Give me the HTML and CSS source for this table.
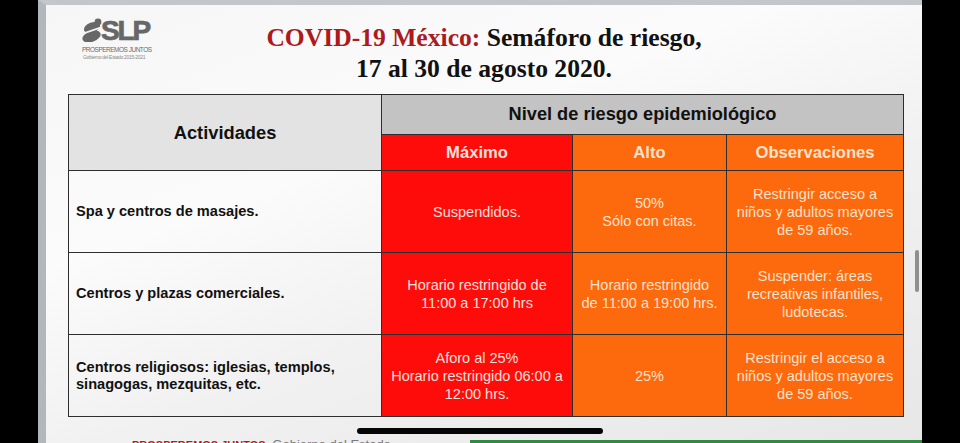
FILE: index.html
```html
<!DOCTYPE html>
<html lang="es">
<head>
<meta charset="utf-8">
<title>COVID-19 México: Semáforo de riesgo</title>
<link rel="stylesheet" href="styles.css">
</head>
<body>
<div class="screen">
  <header class="slide-head">
    <div class="logo">
      <div class="logo-top">
        <svg class="logo-mark" width="20" height="24" viewBox="0 0 20 24" aria-hidden="true">
          <g fill="#676767">
            <ellipse cx="10" cy="9.5" rx="8.5" ry="5" transform="rotate(-20 10 9.5)"/>
            <circle cx="16" cy="4" r="3.4"/>
            <ellipse cx="9.5" cy="18.5" rx="9.5" ry="5.4" transform="rotate(-20 9.5 18.5)"/>
          </g>
          <path d="M0 16 L20 9" stroke="#f5f5f5" stroke-width="1.8"/>
        </svg>
        <span class="logo-slp">SLP</span>
      </div>
      <div class="logo-tag">PROSPEREMOS JUNTOS</div>
      <div class="logo-sub">Gobierno del Estado 2015-2021</div>
    </div>
    <h1 class="title"><span class="title-red">COVID-19 México:</span> Semáforo de riesgo,<br>17 al 30 de agosto 2020.</h1>
    <div></div>
  </header>

  <table class="risk">
    <colgroup>
      <col class="c-act"><col class="c-max"><col class="c-alto"><col class="c-obs">
    </colgroup>
    <thead>
      <tr class="h1row">
        <th rowspan="2" class="th-act">Actividades</th>
        <th colspan="3" class="th-nivel">Nivel de riesgo epidemiológico</th>
      </tr>
      <tr class="h2row">
        <th class="red">Máximo</th>
        <th class="orange">Alto</th>
        <th class="orange">Observaciones</th>
      </tr>
    </thead>
    <tbody>
      <tr>
        <td class="act">Spa y centros de masajes.</td>
        <td class="red">Suspendidos.</td>
        <td class="orange">50%<br>Sólo con citas.</td>
        <td class="orange">Restringir acceso a<br>niños y adultos mayores<br>de 59 años.</td>
      </tr>
      <tr>
        <td class="act">Centros y plazas comerciales.</td>
        <td class="red">Horario restringido de<br>11:00 a 17:00 hrs</td>
        <td class="orange">Horario restringido<br>de 11:00 a 19:00 hrs.</td>
        <td class="orange">Suspender: áreas<br>recreativas infantiles,<br>ludotecas.</td>
      </tr>
      <tr>
        <td class="act">Centros religiosos: iglesias, templos,<br>sinagogas, mezquitas, etc.</td>
        <td class="red">Aforo al 25%<br>Horario restringido 06:00 a<br>12:00 hrs.</td>
        <td class="orange">25%</td>
        <td class="orange">Restringir el acceso a<br>niños y adultos mayores<br>de 59 años.</td>
      </tr>
    </tbody>
  </table>

  <footer class="slide-foot">
    <span class="foot-text"><b>PROSPEREMOS JUNTOS,</b> Gobierno del Estado</span>
    <span class="foot-green"></span>
  </footer>

  <div class="scroll-thumb"></div>
  <div class="home-bar"></div>
</div>
</body>
</html>
```
FILE: styles.css
```css
html, body {
  margin: 0;
  padding: 0;
}
body {
  width: 960px;
  height: 443px;
  overflow: hidden;
  background: #000;
  font-family: "Liberation Sans", Arial, sans-serif;
}
.screen {
  position: relative;
  box-sizing: border-box;
  margin-left: 38px;
  width: 884px;
  height: 443px;
  overflow: hidden;
  border-left: 8px solid #b2b7bc;
  border-top: 5px solid #c3c7cb;
  background: linear-gradient(160deg, #f6f6f6 0%, #fbfbfb 35%, #f1f1f1 60%, #e7e7e7 100%);
}
.slide-head {
  display: grid;
  grid-template-columns: 1fr auto 1fr;
  padding-top: 17px;
}
.logo {
  padding-left: 36px;
  margin-top: -2px;
  color: #676767;
}
.logo-top {
  display: flex;
  align-items: flex-start;
  height: 22px;
}
.logo-mark {
  display: block;
  margin-top: -2px;
  flex: none;
}
.logo-slp {
  display: block;
  margin-left: -1px;
  font-weight: bold;
  font-size: 28px;
  line-height: 22px;
  letter-spacing: -2.2px;
  -webkit-text-stroke: 0.7px #676767;
}
.logo-tag {
  margin-top: 4px;
  font-size: 6.5px;
  line-height: 8px;
  letter-spacing: -0.5px;
  white-space: nowrap;
  color: #6a6a6a;
}
.logo-sub {
  padding-left: 1px;
  font-size: 5px;
  line-height: 6px;
  letter-spacing: -0.3px;
  white-space: nowrap;
  color: #8a8a8a;
}
.title {
  margin: 0;
  font-family: "Liberation Serif", "Times New Roman", serif;
  font-weight: bold;
  font-size: 25.6px;
  line-height: 31px;
  text-align: center;
  color: #111;
}
.title-red { color: #ad1a1c; }

.risk {
  margin: 10px 0 0 22px;
  width: 835px;
  table-layout: fixed;
  border-collapse: collapse;
  border: 1.5px solid #2e2e2e;
}
.c-act { width: 313px; }
.c-max { width: 191px; }
.c-alto { width: 154px; }
.c-obs { width: 177px; }
.risk th, .risk td {
  border: 1.5px solid #2e2e2e;
  padding: 0;
  text-align: center;
  vertical-align: middle;
}
.h1row { height: 40px; }
.h2row { height: 36px; }
.risk tbody tr { height: 82px; }
.th-act {
  background: #e3e3e3;
  color: #111;
  font-size: 18.3px;
  font-weight: bold;
}
.th-nivel {
  background: #c3c3c3;
  color: #111;
  font-size: 18.2px;
  font-weight: bold;
}
.h2row th {
  font-size: 16.6px;
  font-weight: bold;
}
.red {
  background: #fd0c0a;
  color: #fde0da;
}
.orange {
  background: #fd690d;
  color: #fde2cc;
}
.risk td {
  font-size: 14.5px;
  line-height: 18px;
}
.risk td.act {
  text-align: left;
  padding-left: 7px;
  background: transparent;
  color: #111;
  font-weight: bold;
  font-size: 14.6px;
  line-height: 17px;
}

.slide-foot {
  display: flex;
  align-items: flex-start;
  margin-top: 20px;
  padding-left: 86px;
}
.foot-text {
  font-size: 13px;
  color: #7a7a7a;
  white-space: nowrap;
}
.foot-text b {
  font-size: 11px;
  color: #c0171b;
}
.foot-green {
  margin-left: auto;
  margin-top: 3px;
  width: 452px;
  height: 10px;
  background: #2f8b3d;
}
.scroll-thumb {
  position: absolute;
  left: 869px;
  top: 245px;
  width: 4px;
  height: 42px;
  border-radius: 2px;
  background: #8f8f8f;
}
.home-bar {
  position: absolute;
  left: 311px;
  top: 423px;
  width: 246px;
  height: 6px;
  border-radius: 3px;
  background: #050505;
}
```
